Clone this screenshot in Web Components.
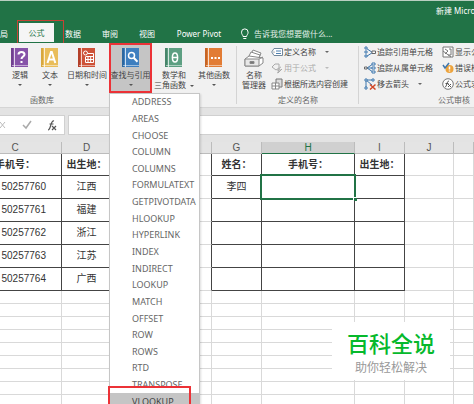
<!DOCTYPE html>
<html lang="zh-CN">
<head>
<meta charset="utf-8">
<title>新建 Microsoft Excel</title>
<style>
html,body{margin:0;height:100%;overflow:hidden}
body{font:8px/12px "Noto Sans","Noto Sans CJK SC",sans-serif;color:#444;background:#fff}
</style>
</head>
<body>
<excel-app></excel-app>
<script>
const define=(name,html,setup)=>customElements.define(name,class extends HTMLElement{
  constructor(){super();const t=document.createElement('template');t.innerHTML=html;
    this.attachShadow({mode:'open'}).append(t.content.cloneNode(true));}
  connectedCallback(){if(setup)setup(this,this.shadowRoot)}
});

/* icon drawings, keyed by name */
const book=(c,d,g)=>`<svg width="18" height="20" viewBox="0 0 18 20"><path fill="${c}" d="M0 0h17v19H0z"/><path fill="${d}" d="M0 0h2v19H0z"/><path stroke="#fff" stroke-opacity=".75" d="M3.5 0v19"/><path stroke="#fff" stroke-opacity=".5" d="M1 17.5h16"/>${g}</svg>`;
const small=g=>`<svg width="12" height="12" viewBox="0 0 12 12" fill="none">${g}</svg>`;
const ICONS={
logic:book('#8653a8','#70408f','<path fill="none" stroke="#fff" stroke-width="2" d="M7.500 6.500c0-3.500 6-3.500 6 0 0 2-3 2.200-3 4.500M10.500 13v2"/>'),
text:book('#e9bd5b','#d7a73f','<path fill="none" stroke="#fff" stroke-width="2" d="M6.500 15l3.500-11h.8l3.500 11M8 11.500h5"/>'),
date:book('#cd5137','#b33f29','<circle cx="7.500" cy="5" r="2" fill="none" stroke="#fff"/><path fill="none" stroke="#fff" d="M10 5.500h5.500v9H7.500V9M7.500 8.500h8M7.500 11.500h8M10 8v6.500M12.700 8v6.500"/>'),
lookup:book('#3f7fbf','#2d679f','<circle cx="9.500" cy="7.500" r="3" fill="none" stroke="#fff" stroke-width="1.500"/><path stroke="#fff" stroke-width="2" d="M11.700 9.700l3.800 4"/>'),
math:book('#5d9f82','#47856a','<ellipse cx="10" cy="9.500" rx="2.600" ry="4.500" fill="none" stroke="#fff" stroke-width="1.500"/><path stroke="#fff" stroke-width="1.500" d="M8 9.500h4"/>'),
more:book('#e27c35','#c56425','<path fill="#fff" d="M6 9h2v2H6zM9.500 9h2v2h-2zM13 9h2v2h-2z"/>'),
names:'<svg width="20" height="20" viewBox="0 0 20 20" fill="#fff" stroke="#888" stroke-width="1"><path d="M6 8L9 2l8 3-2 5z"/><path d="M4 10l3-6 9 3-2 5z"/><path d="M1 11l4-3 14 2v5l-4 3H1z"/><path fill="#e8e8e8" d="M1 11h14v7H1zM15 11l4-2"/><path fill="#777" d="M6 13.500h4v2H6z"/></svg>',
tag:small('<path stroke="#71879b" fill="#fff" d="M.7 6L3 2.500h8.500v7H3z"/><path stroke="#4e80b0" d="M5 5h5M5 7.500h5"/><circle cx="3" cy="6" r=".6" fill="#555"/>'),
use:small('<path stroke="#aaa" d="M1 5l3-3h4v4L5 8zM6 11c2 0 1.500-6 4-6M6 8h4M7 11l4-4"/>'),
create:small('<path stroke="#777" fill="#ddd" d="M5 8V1h6v8H8"/><path stroke="#888" fill="#fff" d="M1 5h7v6H1zM1 8h7M4.500 5v6"/>'),
prec:small('<path stroke="#3d76ad" d="M2.500 2.500l6 4-6 4"/><path fill="#fff" stroke="#3d76ad" d="M1 1h2v2H1zM1 5h2v2H1zM1 9h2v2H1z"/><path fill="#fff" stroke="#666" d="M8 5h3.500v2.500H8z"/>'),
dep:small('<path stroke="#3d76ad" d="M3 6l6-4M3 6h6M3 6l6 4"/><path fill="#fff" stroke="#3d76ad" d="M8 1h3v2H8zM8 5h3v2H8zM8 9h3v2H8z"/><path fill="#fff" stroke="#666" d="M.5 5H3v2H.500z"/>'),
remove:small('<path stroke="#3d76ad" d="M2 2l6 5M2 2v8M2 2h7"/><path fill="#fff" stroke="#3d76ad" d="M1 1h2v2H1zM8 1h2v2H8zM1 9h2v2H1z"/><path stroke="#d24726" stroke-width="1.500" d="M6 6.500l5.500 5M11.500 6.500l-5.500 5"/>'),
show:small('<path stroke="#777" fill="#fff" d="M1 1h10v10H1z"/><path stroke="#777" d="M3 3l3 2-3 3M7 3h2v6H6M1 5l8 6"/>'),
check:small('<circle cx="7.500" cy="7" r="4" fill="#eda33b"/><path stroke="#3d76ad" stroke-width="1.500" d="M1 3l2 3 4-5"/><path stroke="#fff" stroke-width="1.500" d="M7.500 4.500v3M7.500 8.500v1"/>'),
fx:small('<circle cx="6" cy="6" r="5.300" stroke="#777" fill="#fff"/><path stroke="#555" d="M3 9c2 0 1.500-6 4-6M3.500 5.500h3M6 6l3 3M9 6L6 9"/>'),
bulb:'<svg width="10" height="12" viewBox="0 0 10 12" fill="none" stroke="#fff"><path d="M3 8.500C3 7 1.500 6.500 1.500 4.200a3.300 3.300 0 0 1 6.600 0C8.100 6.500 6.600 7 6.600 8.500zM3.300 10.500h3"/></svg>',
bar:'<svg width="58" height="12" viewBox="0 0 58 12" fill="none"><path stroke="#bbb" d="M0 3l5 6M5 3L0 9"/><path stroke="#aaa" stroke-width="1.500" d="M23 6l3 3 5-7"/><path stroke="#555" stroke-width="1.200" d="M48 11c3 0 2.500-10 6-9M49.500 5h4M52 7l4 4M56 7l-4 4"/></svg>'
};
define('x-icon','<style>:host{display:block;line-height:0;flex:none}svg{display:block}</style><span></span>',(h,r)=>r.querySelector('span').innerHTML=ICONS[h.getAttribute('name')]||'');

define('title-bar',`<style>:host{display:block;height:20px;box-sizing:border-box;border-top:1px solid #b9cfc1;background:#217346;color:#fff;overflow:hidden}
div{display:flex;justify-content:flex-end;padding-top:4px}span{width:38px;white-space:nowrap}</style><div><span><slot></slot></span></div>`);

define('ribbon-tab',`<style>:host{display:flex;flex:none}
button{all:unset;box-sizing:border-box;height:19px;line-height:17px;color:#fff;white-space:nowrap;text-align:center;width:100%}
:host([active]) button{background:#f5f5f5;color:#217346}</style><button type="button" role="tab"><slot></slot></button>`);

define('tab-strip',`<style>:host{display:flex;height:23px;background:#217346;align-items:flex-end;overflow:hidden}
.first{width:8px;margin-right:9px}
.mark{box-sizing:border-box;width:47px;height:23px;padding:2px 9px 0 1px;border:1px solid #c44335;border-bottom:0;flex:none}
.mark ribbon-tab{width:35px}.r{width:18px;margin-right:19px}.p{width:48px;margin-right:17px}
.tell{all:unset;display:flex;gap:4px;align-items:center;color:#e4efe8;height:19px;white-space:nowrap}.tell span{line-height:17px}</style>
<ribbon-tab class="first">局</ribbon-tab><div class="mark"><ribbon-tab active>公式</ribbon-tab></div>
<ribbon-tab class="r">数据</ribbon-tab><ribbon-tab class="r">审阅</ribbon-tab><ribbon-tab class="r">视图</ribbon-tab><ribbon-tab class="p">Power Pivot</ribbon-tab>
<button class="tell" type="button"><x-icon name="bulb"></x-icon><span>告诉我您想要做什么...</span></button>`);

define('big-button',`<style>:host{display:block;position:relative;height:50px}
button{all:unset;box-sizing:border-box;width:100%;height:100%;display:flex;flex-direction:column;align-items:center;padding-top:5px;white-space:nowrap}
.label{line-height:10px;margin-top:2px;text-align:center}
.arrow{border:2px solid transparent;border-top-color:#555;border-bottom:0;margin-top:4px;width:0}
:host([nodrop]) .arrow{display:none}
:host([open]){outline:2px solid #ec3237;outline-offset:-2px;z-index:3;background:#c5c5c5}</style>
<button type="button"><x-icon></x-icon><span class="label"><slot></slot></span><span class="arrow"></span></button><slot name="menu"></slot>`,
(h,r)=>{r.querySelector('x-icon').shadowRoot.querySelector('span').innerHTML=ICONS[h.getAttribute('icon')]});

define('small-button',`<style>:host{display:block}button{all:unset;display:flex;align-items:center;gap:1px;height:16px;white-space:nowrap}
:host([disabled]) button{color:#aaa}.arrow{display:none;border:2px solid transparent;border-top-color:#666;border-bottom:0;margin-left:8px}
:host([drop]) .arrow{display:block}:host([disabled]) .arrow{border-top-color:#bbb}</style>
<button type="button"><x-icon></x-icon><slot></slot><span class="arrow"></span></button>`,
(h,r)=>{r.querySelector('x-icon').shadowRoot.querySelector('span').innerHTML=ICONS[h.getAttribute('icon')]});

define('ribbon-group',`<style>:host{display:grid;grid-template-rows:50px 14px;box-sizing:border-box;flex:none;position:relative}
.body{display:flex}.caption{line-height:13px;text-align:center;color:#666;white-space:nowrap}
:host(:not([last]))::after{content:"";position:absolute;right:0;top:3px;bottom:3px;border-right:1px solid #d4d4d4}</style>
<div class="body"><slot></slot></div><div class="caption"><slot name="caption"></slot></div>`);

define('function-menu',`<style>:host{display:block;position:absolute;z-index:2;left:0;top:50px;width:91px;box-sizing:border-box;background:#fff;border:1px solid #c6c6c6;box-shadow:1px 1px 2px #0002}
ul{list-style:none;margin:0;padding:0;display:grid;grid-auto-rows:1fr;height:316px}
li{display:grid}button{all:unset;display:flex;align-items:center;padding-left:22px;font-size:9px;line-height:12px;color:#666}
.sel{background:#c5c5c5;color:#444}
.mark{position:absolute;left:-2px;top:292px;width:79px;height:30px;border:2px solid #ec3237;background:linear-gradient(#fff 5px,transparent 5px);pointer-events:none}</style>
<ul></ul><div class="mark"></div>`,(h,r)=>{
 const u=r.querySelector('ul');
 'ADDRESS AREAS CHOOSE COLUMN COLUMNS FORMULATEXT GETPIVOTDATA HLOOKUP HYPERLINK INDEX INDIRECT LOOKUP MATCH OFFSET ROW ROWS RTD TRANSPOSE VLOOKUP'.split(' ').forEach(n=>{
  const l=document.createElement('li'),b=document.createElement('button');b.type='button';b.textContent=n;if(n==='VLOOKUP')b.className='sel';l.append(b);u.append(l)})});

define('excel-ribbon',`<style>:host{display:flex;height:64px;background:#f1f1f1;position:relative;z-index:2;border-bottom:1px solid #d5d5d5}
.lib{width:237px}.lib>div{display:grid;width:100%;grid-template-columns:30px 30px 44px 43px 44px 36px;padding-left:5px}
.lib [slot=caption]{display:block;width:84px}
.lib i{display:inline-block;vertical-align:middle;margin-left:4px;border:2px solid transparent;border-top-color:#555;border-bottom:0}
.def{width:122px}.def .n{width:34px}.aud{width:190px}.col{padding-top:1px}.a{width:78px;padding-left:5px}</style>
<ribbon-group class="lib"><div>
<big-button icon="logic">逻辑</big-button><big-button icon="text">文本</big-button><big-button icon="date">日期和时间</big-button>
<big-button icon="lookup" open>查找与引用<function-menu slot="menu"></function-menu></big-button>
<big-button icon="math" nodrop>数学和<br>三角函数<i></i></big-button><big-button icon="more">其他函数</big-button></div>
<span slot="caption">函数库</span></ribbon-group>
<ribbon-group class="def"><big-button class="n" icon="names" nodrop>名称<br>管理器</big-button>
<div class="col"><small-button icon="tag" drop>定义名称</small-button><small-button icon="use" disabled drop>用于公式</small-button><small-button icon="create">根据所选内容创建</small-button></div>
<span slot="caption">定义的名称</span></ribbon-group>
<ribbon-group class="aud" last><div class="col a"><small-button icon="prec">追踪引用单元格</small-button><small-button icon="dep">追踪从属单元格</small-button><small-button icon="remove" drop>移去箭头</small-button></div>
<div class="col"><small-button icon="show">显示公式</small-button><small-button icon="check">错误检查</small-button><small-button icon="fx">公式求值</small-button></div>
<span slot="caption">公式审核</span></ribbon-group>`);

define('formula-bar',`<style>:host{display:flex;gap:3px;padding:7px 0;background:#e3e3e3}
.tools,input{box-sizing:border-box;height:20px;background:#fff;border:1px solid #d0d0d0}
.tools{width:65px;border-left:0;display:flex;align-items:center}
input{flex:1;min-width:0;border-right:0;border-radius:0;outline:0;padding:0 4px;font:inherit}</style>
<div class="tools"><x-icon name="bar"></x-icon></div><input aria-label="编辑栏">`);

define('work-sheet',`<style>:host{display:block;overflow:hidden;flex:1;min-height:0;position:relative}
table{border-collapse:separate;border-spacing:0;table-layout:fixed;width:calc(100% + 31px);margin-left:-31px;font:10px/12px "Liberation Sans","Noto Sans CJK SC",sans-serif;color:#333}
th,td{box-sizing:border-box;padding:0;height:13px;border-right:1px solid #d9d9d9;border-bottom:1px solid #d9d9d9;text-align:center;font-weight:400;white-space:nowrap;line-height:11px}
thead th{background:#e4e4e4;border-color:#bcbcbc;color:#555;height:12px;line-height:11px}
thead .on{background:#d0d0d0;color:#217346;border-bottom-color:#217346}
.t td{height:23px;line-height:22px}.t.h td{height:22px;line-height:21px;font-weight:700}
td.b{border-color:#444}td.f{border-bottom-color:#d9d9d9}td.num{text-align:right;padding-right:15px}
.cur{position:relative}.cur i{position:absolute;inset:-2px;border:2px solid #217346}
.cur i::after{content:"";position:absolute;right:-3px;bottom:-3px;width:3px;height:3px;background:#217346;border:1px solid #fff;border-width:1px 0 0 1px}</style>
<table><colgroup></colgroup><thead><tr></tr></thead><tbody></tbody></table>`,(h,r)=>{
 const w=[93,50,50,50,50,93,50,49,0],cols='CDEFGHIJK';
 w.forEach(x=>{const c=document.createElement('col');if(x)c.style.width=x+'px';r.querySelector('colgroup').append(c)});
 for(const c of cols){const t=document.createElement('th');t.scope='col';t.textContent='EFK'.includes(c)?'':c;if(c==='H')t.className='on';r.querySelector('thead tr').append(t)}
 const rows=[{C:'手机号：',D:'出生地：',G:'姓名：',H:'手机号：',I:'出生地：'},{C:'50257760',D:'江西',G:'李四'},{C:'50257761',D:'福建'},{C:'50257762',D:'浙江'},{C:'50257763',D:'江苏'},{C:'50257764',D:'广西'}];
 for(let i=0;i<16;i++){const tr=document.createElement('tr'),d=rows[i];if(d)tr.className=i?'t':'t h';
  for(const c of cols){const td=document.createElement('td');
   if(d){td.textContent=d[c]||'';if('CDFGHI'.includes(c))td.className=c==='F'?'b f':'b';
    if(c==='C'&&i)td.classList.add('num');if(c==='H'&&i===1){td.classList.add('cur');td.append(document.createElement('i'))}}
   tr.append(td)}
  r.querySelector('tbody').append(tr)}});

define('brand-card',`<style>:host{display:block;position:absolute;right:24px;bottom:24px;width:118px;box-sizing:border-box;padding:4px 0;background:#fff;text-align:center;white-space:nowrap;font-family:"Noto Sans CJK SC",sans-serif}
b{display:block;font-size:22px;line-height:32px;font-weight:500;color:#06b92c}span{display:block;font-size:12px;line-height:18px;color:#999}</style>
<b>百科全说</b><span>助你轻松解决</span>`);

define('excel-app',`<style>:host{display:flex;flex-direction:column;height:100vh;position:relative;overflow:hidden}</style>
<title-bar>新建 Micro</title-bar><tab-strip></tab-strip><excel-ribbon></excel-ribbon><formula-bar></formula-bar><work-sheet></work-sheet><brand-card></brand-card>`);
</script>
</body>
</html>
